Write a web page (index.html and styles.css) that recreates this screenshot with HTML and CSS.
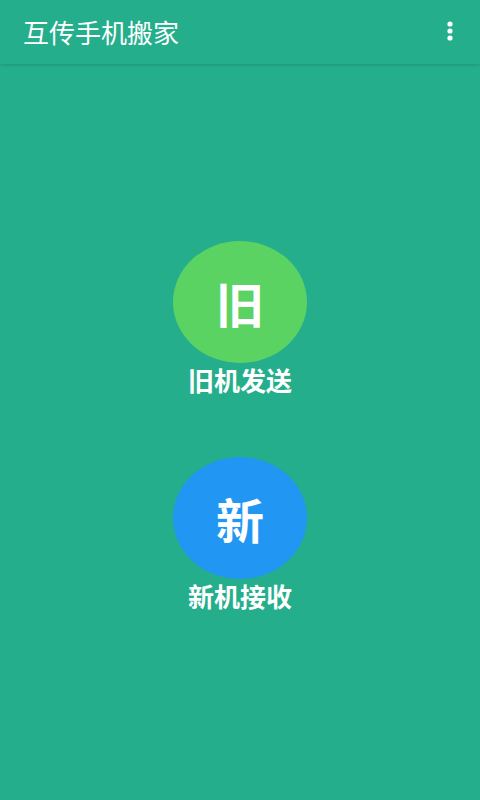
FILE: index.html
```html
<!DOCTYPE html>
<html lang="zh-CN">
<head>
<meta charset="utf-8">
<title>互传手机搬家</title>
<link rel="stylesheet" href="styles.css">
</head>
<body>
<div class="app">
  <header class="toolbar">
    <h1 class="title">互传手机搬家</h1>
    <button class="menu" aria-label="更多">
      <svg width="6" height="20" viewBox="0 0 6 20"><circle cx="3" cy="3" r="2.6" fill="#fff"/><circle cx="3" cy="10" r="2.6" fill="#fff"/><circle cx="3" cy="17" r="2.6" fill="#fff"/></svg>
    </button>
  </header>
  <main class="content">
    <div class="choice">
      <div class="circle circle-old">旧</div>
      <div class="label">旧机发送</div>
    </div>
    <div class="choice">
      <div class="circle circle-new">新</div>
      <div class="label">新机接收</div>
    </div>
  </main>
</div>
</body>
</html>
```
FILE: styles.css
```css
* { box-sizing: border-box; }
html, body {
  margin: 0;
  padding: 0;
  width: 480px;
  height: 800px;
  background: #24ae8c;
  font-family: "Noto Sans CJK SC", "Noto Sans", sans-serif;
  color: #fff;
}
.app {
  display: flex;
  flex-direction: column;
  height: 800px;
}
.toolbar {
  height: 64px;
  display: flex;
  align-items: center;
  justify-content: space-between;
  padding: 0 20px 0 23px;
  box-shadow: 0 1px 3px rgba(0,0,0,0.15);
  position: relative;
  z-index: 1;
}
.title {
  margin: 0;
  font-size: 26px;
  font-weight: 400;
  line-height: 1;
}
.menu {
  background: none;
  border: 0;
  padding: 0;
  width: 20px;
  display: flex;
  justify-content: center;
  margin-top: -2px;
}
.content {
  display: flex;
  flex-direction: column;
  align-items: center;
  padding-top: 177px;
  gap: 62px;
}
.choice {
  display: flex;
  flex-direction: column;
  align-items: center;
}
.circle {
  width: 134px;
  height: 122px;
  border-radius: 50%;
  display: flex;
  align-items: center;
  justify-content: center;
  font-size: 48px;
  font-weight: 700;
  line-height: 1;
}
.circle-old { background: #5bd363; }
.circle-new { background: #2196f3; }
.label {
  margin-top: 2px;
  font-size: 26px;
  font-weight: 700;
  line-height: 30px;
}
```
